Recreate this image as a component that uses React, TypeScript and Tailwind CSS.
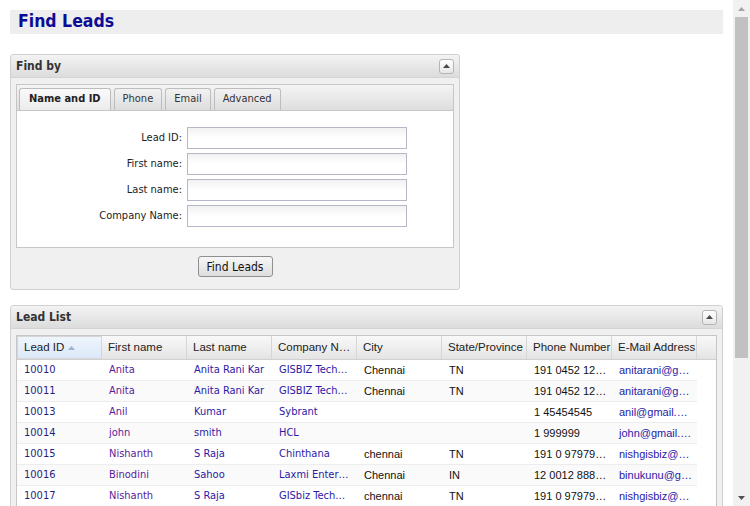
import React from 'react'

const tahoma = "font-['DejaVu_Sans_Condensed','DejaVu_Sans',sans-serif]"
const arial = "font-['Liberation_Sans',Arial,sans-serif]"

const CollapseButton = () => (
  <div className="w-[15px] h-[15px] border border-[#b4b4b4] rounded-[3px] bg-gradient-to-b from-white to-[#e6e6e6] flex items-center justify-center">
    <svg width="7" height="4" viewBox="0 0 7 4">
      <path d="M0 4 L3.5 0 L7 4 Z" fill="#4a4a4a" />
    </svg>
  </div>
)

const PanelHeader = ({ title }: { title: string }) => (
  <div className="h-[23px] flex items-center justify-between pl-[5px] pr-[5px] bg-gradient-to-b from-[#f3f3f3] to-[#dcdcdc] border-b border-[#d4d4d4]">
    <span className={`${tahoma} font-bold text-[12px] text-[#333]`}>{title}</span>
    <CollapseButton />
  </div>
)

const tabs = ['Name and ID', 'Phone', 'Email', 'Advanced']
const fields = ['Lead ID:', 'First name:', 'Last name:', 'Company Name:']

const columns = [
  'Lead ID',
  'First name',
  'Last name',
  'Company N…',
  'City',
  'State/Province',
  'Phone Number',
  'E-Mail Address',
]

const rows = [
  ['10010', 'Anita', 'Anita Rani Kar', 'GISBIZ Tech…', 'Chennai', 'TN', '191 0452 12…', 'anitarani@g…'],
  ['10011', 'Anita', 'Anita Rani Kar', 'GISBIZ Tech…', 'Chennai', 'TN', '191 0452 12…', 'anitarani@g…'],
  ['10013', 'Anil', 'Kumar', 'Sybrant', '', '', '1 45454545', 'anil@gmail.…'],
  ['10014', 'john', 'smith', 'HCL', '', '', '1 999999', 'john@gmail.…'],
  ['10015', 'Nishanth', 'S Raja', 'Chinthana', 'chennai', 'TN', '191 0 97979…', 'nishgisbiz@…'],
  ['10016', 'Binodini', 'Sahoo', 'Laxmi Enter…', 'Chennai', 'IN', '12 0012 888…', 'binukunu@g…'],
  ['10017', 'Nishanth', 'S Raja', 'GISbiz Tech…', 'chennai', 'TN', '191 0 97979…', 'nishgisbiz@…'],
]

const cellStyle = [
  `${tahoma} text-[11px] text-[#1f1f80]`,
  `${tahoma} text-[11px] text-[#5a1a9c]`,
  `${tahoma} text-[11px] text-[#2a1aa6]`,
  `${tahoma} text-[11px] text-[#2a1aa6]`,
  `${arial} text-[11px] text-[#111]`,
  `${arial} text-[11px] text-[#111]`,
  `${arial} text-[11px] text-[#111]`,
  `${arial} text-[11px] text-[#2a1aa6]`,
]

const App = () => {
  return (
    <div className="w-[750px] h-[506px] flex overflow-hidden bg-white">
      {/* Page */}
      <div className="w-[733px] h-[506px] overflow-hidden pt-[10px] pl-[10px]">
        {/* Title */}
        <div className="w-[713px] h-[24px] bg-[#eeeeee] flex items-center pl-[8px]">
          <h1 className={`${tahoma} font-bold text-[17.5px] leading-none text-[#0c0c96]`}>Find Leads</h1>
        </div>

        {/* Find by panel */}
        <div className="mt-[20px] w-[450px] h-[236px] border border-[#d0d0d0] rounded-[3px] bg-[#f0f0f0] overflow-hidden">
          <PanelHeader title="Find by" />
          <div className="pt-[6px] px-[5px]">
            <div className="border border-[#c6c6c6] bg-white">
              {/* Tab strip */}
              <div className="h-[26px] flex items-end gap-[3px] pl-[2px] bg-gradient-to-b from-[#f4f4f4] to-[#dedede] border-b border-[#c6c6c6]">
                {tabs.map((t, i) => (
                  <div
                    key={t}
                    className={`h-[22px] flex items-center border border-b-0 rounded-t-[3px] whitespace-nowrap ${
                      i === 0
                        ? 'px-[9px] border-[#bcbcbc] bg-gradient-to-b from-[#fafafa] to-[#ececec] font-bold text-[#222]'
                        : 'px-[8px] border-[#bdbdbd] bg-gradient-to-b from-[#f2f2f2] to-[#dddddd] text-[#333]'
                    } ${tahoma} text-[11px]`}
                  >
                    {t}
                  </div>
                ))}
              </div>
              {/* Form */}
              <div className="h-[136px] pt-[16px] flex flex-col gap-[4px]">
                {fields.map((f) => (
                  <div key={f} className="flex items-center">
                    <label className={`${tahoma} w-[165px] text-right text-[11px] text-[#222]`}>{f}</label>
                    <div className="ml-[5px] w-[220px] h-[22px] border border-[#b5b8c8] bg-gradient-to-b from-[#f1f1f1] via-white to-white" />
                  </div>
                ))}
              </div>
            </div>
            <div className="flex justify-center pt-[8px]">
              <button className={`${tahoma} w-[75px] h-[21px] border border-[#8f8f8f] rounded-[3px] bg-gradient-to-b from-[#f7f7f7] to-[#dedede] text-[12px] text-[#111]`}>
                Find Leads
              </button>
            </div>
          </div>
        </div>

        {/* Lead List panel */}
        <div className="mt-[15px] w-[713px] h-[260px] border border-[#d0d0d0] rounded-[3px] bg-[#f0f0f0] overflow-hidden">
          <PanelHeader title="Lead List" />
          <div className="pt-[6px] px-[5px]">
            <div className="w-[701px] h-[230px] border border-[#c6c6c6] bg-white">
              {/* Header */}
              <div className="flex h-[24px] bg-gradient-to-b from-[#f9f9f9] to-[#e4e4e4] border-b border-[#d0d0d0]">
                {columns.map((c, i) => (
                  <div
                    key={c}
                    className={`w-[85px] shrink-0 h-full flex items-center gap-[4px] pl-[6px] border-r border-[#d6d6d6] whitespace-nowrap overflow-hidden ${arial} text-[11.5px] text-[#222] ${
                      i === 0 ? 'bg-gradient-to-b from-[#eef5fd] to-[#dce9f8] border border-[#b8d2ee]' : ''
                    }`}
                  >
                    {c}
                    {i === 0 && (
                      <svg width="7" height="4" viewBox="0 0 7 4">
                        <path d="M0 4 L3.5 0 L7 4 Z" fill="#9ab3d0" />
                      </svg>
                    )}
                  </div>
                ))}
                <div className="flex-1" />
              </div>
              {/* Rows */}
              {rows.map((r, ri) => (
                <div
                  key={ri}
                  className={`flex w-[680px] h-[21px] border-b border-[#ededed] ${ri % 2 === 1 ? 'bg-[#fafafa]' : 'bg-white'}`}
                >
                  {r.map((v, ci) => (
                    <div
                      key={ci}
                      className={`w-[85px] shrink-0 h-full flex items-center pl-[7px] whitespace-nowrap overflow-hidden ${cellStyle[ci]}`}
                    >
                      {v}
                    </div>
                  ))}
                </div>
              ))}
            </div>
          </div>
        </div>
      </div>

      {/* Fake browser scrollbar */}
      <div className="w-[17px] h-[506px] bg-[#f1f1f1] flex flex-col items-center">
        <div className="h-[17px] flex items-center justify-center">
          <svg width="7" height="4" viewBox="0 0 7 4">
            <path d="M0 4 L3.5 0 L7 4 Z" fill="#a3a3a3" />
          </svg>
        </div>
        <div className="w-[13px] h-[341px] bg-[#c1c1c1]" />
        <div className="flex-1" />
        <div className="h-[17px] flex items-center justify-center">
          <svg width="7" height="4" viewBox="0 0 7 4">
            <path d="M0 0 L3.5 4 L7 0 Z" fill="#505050" />
          </svg>
        </div>
      </div>
    </div>
  )
}

export default App
